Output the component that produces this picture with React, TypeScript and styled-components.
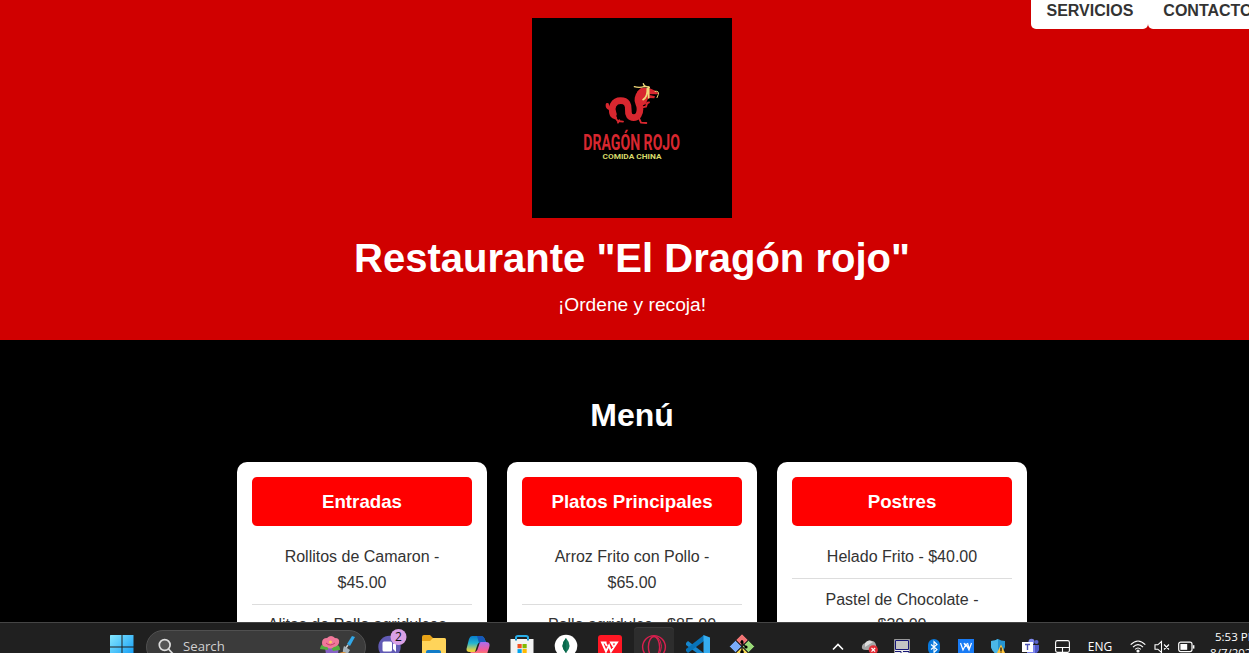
import React from "react";
import styled, { createGlobalStyle } from "styled-components";

const GlobalStyle = createGlobalStyle`
  *, *::before, *::after { box-sizing: border-box; }
  body {
    margin: 0;
    overflow: hidden;
    background: #000;
    font-family: Arial, "Liberation Sans", sans-serif;
    line-height: 1.6;
    color: #333;
  }
  h1, h2, h3, p, ul { margin: 0; padding: 0; }
`;

const Screen = styled.div`
  position: relative;
  width: 100vw;
  height: 653px;
  overflow: hidden;
`;

const Page = styled.div`
  width: 1264px;
`;

const Header = styled.header`
  display: flex;
  flex-direction: column;
  align-items: center;
  height: 340px;
  padding-top: 18px;
  background: #d00000;
  color: #fff;
`;

const Nav = styled.nav`
  position: absolute;
  top: -9px;
  left: 1031px;
  display: flex;
`;

const NavLink = styled.a`
  flex: none;
  height: 38px;
  padding: 1px 14.5px 0 15.5px;
  border-radius: 5px;
  background: #fff;
  color: #333;
  font-size: 16px;
  font-weight: bold;
  line-height: 38px;
`;

const Logo = styled.svg`
  display: block;
  width: 200px;
  height: 200px;
  background: #000;
`;

const Title = styled.h1`
  margin-top: 8px;
  font-size: 40px;
  line-height: 64px;
`;

const Tagline = styled.p`
  font-size: 19.2px;
  line-height: 30px;
`;

const Menu = styled.main`
  display: flex;
  flex-direction: column;
  align-items: center;
  padding-top: 50px;
`;

const MenuTitle = styled.h2`
  color: #fff;
  font-size: 32px;
  line-height: 51px;
`;

const Cards = styled.div`
  display: flex;
  gap: 20px;
  margin-top: 21px;
`;

const Card = styled.section`
  width: 250px;
  height: 330px;
  padding: 15px;
  border-radius: 10px;
  background: #fff;
  text-align: center;
`;

const CardTitle = styled.h3`
  height: 49px;
  margin-bottom: 10.8px;
  border-radius: 5px;
  background: #f00;
  color: #fff;
  font-size: 18.72px;
  line-height: 49px;
`;

const Dishes = styled.ul`
  list-style: none;
`;

const Dish = styled.li`
  padding: 7.6px 10px 8px;
  border-bottom: 1px solid #ddd;
  font-size: 16px;
  line-height: 25.7px;
`;

const Taskbar = styled.footer`
  position: absolute;
  left: 0;
  top: 622px;
  display: flex;
  align-items: center;
  width: 1264px;
  height: 48px;
  padding-left: 100px;
  border-top: 1px solid #454545;
  background: #202020;
  color: #fff;
  font-family: "Segoe UI", "Open Sans", sans-serif;
`;

const Slot = styled.div<{ $w?: number; $active?: boolean }>`
  display: flex;
  flex: none;
  align-items: center;
  justify-content: center;
  width: ${(p) => p.$w ?? 44}px;
  height: 40px;
  ${(p) => p.$active && "background: #2d2d2d; border-radius: 4px; box-shadow: inset 0 1px #3a3a3a; width: 40px; margin: 0 2px;"}
`;

const Icon = styled.svg`
  display: block;
  flex: none;
  overflow: visible;
`;

const Search = styled.div`
  display: flex;
  flex: none;
  align-items: center;
  width: 220px;
  height: 34px;
  margin: 0 2px;
  padding: 0 9px 0 11px;
  border: 1px solid #505050;
  border-radius: 17px;
  background: #3b3b3b;
  color: #d0d0d0;
  font-size: 13.2px;
`;

const SearchLabel = styled.span`
  flex: 1;
  padding: 0 0 1px 9px;
  line-height: 20px;
`;

const Tray = styled.div`
  display: flex;
  flex: none;
  align-items: center;
  margin-left: 58px;
`;

const Language = styled.span`
  width: 44px;
  text-align: center;
  font-size: 12px;
  line-height: 16px;
`;

const Clock = styled.div`
  width: 58px;
  margin: 0 0 3px -2px;
  text-align: right;
  font-size: 11.5px;
  line-height: 16px;
  white-space: nowrap;
`;

const menu = [
  { title: "Entradas", dishes: ["Rollitos de Camaron - $45.00", "Alitas de Pollo agridulces - $55.00"] },
  { title: "Platos Principales", dishes: ["Arroz Frito con Pollo - $65.00", "Pollo agridulce - $85.00"] },
  { title: "Postres", dishes: ["Helado Frito - $40.00", "Pastel de Chocolate - $30.00"] },
];

const DragonLogo = () => (
  <Logo viewBox="0 0 200 200">
    <g transform="translate(38 52) scale(.3333)">
      <g fill="none" stroke="#d8272f" strokeLinecap="round" strokeLinejoin="round">
        <path d="M112 104q-1 8 6 11t5 13q0 11 13 15" strokeWidth="10" />
        <path d="M130 132c-10-20 2-40 22-40s24 14 23 28c-1 15 4 23 16 23s19-12 19-26c0-18-9-18-6-32 2-10 8-18 19-22" strokeWidth="20" />
        <path d="M135 142l8 11 16 2M205 140l8 18 16 1M216 112l12-2 4-12M229 101l8-4M148 151l-4 7" strokeWidth="5.5" />
      </g>
      <path d="M201 66l12-12 26 1 17 7 10 8-5 3-21 1 15 5-2 6-18-1-8 18-12 6-15-10z" fill="#d8272f" />
      <path d="M239 74l17 1" stroke="#000" strokeWidth="3" />
      <g fill="none" stroke="#f0d878" strokeLinecap="round">
        <path d="M193 50q16 5 31-1l14 3M220 41q1 9 17 10" strokeWidth="4" />
        <path d="M236 52v32M232 56q1 25-13 33" strokeWidth="5" />
        <path d="M255 64q13-2 10 9l-4 10" strokeWidth="3" />
      </g>
    </g>
    <text x="0" y="0" fill="#d8272f" fontFamily="Roboto, sans-serif" fontWeight="700" fontSize="22.5" transform="translate(51.3 132) scale(.64 1)" textLength="151" lengthAdjust="spacingAndGlyphs">DRAGÓN ROJO</text>
    <text x="70.5" y="141" fill="#d7da69" fontFamily="Roboto, sans-serif" fontWeight="700" fontSize="8" textLength="59" lengthAdjust="spacingAndGlyphs">COMIDA CHINA</text>
  </Logo>
);

const StartIcon = () => (
  <Icon width="24" height="24" viewBox="0 0 24 24">
    <defs><linearGradient id="start" x2="1" y2="1"><stop stopColor="#86e8ff" /><stop offset="1" stopColor="#0896f5" /></linearGradient></defs>
    <path d="M.5 0H11.5V11.4H0V.5zM12.5 0H23.5V11.4H12.5zM0 12.4H11.5V24H0zM12.5 12.4H23.5V24H12.5z" fill="url(#start)" />
  </Icon>
);
const SearchIcon = () => (
  <Icon width="16" height="18" viewBox="0 0 16 18" fill="none" stroke="#ddd" strokeWidth="1.7">
    <circle cx="6.7" cy="7" r="5.4" fill="#555" /><path d="M10.5 11l4.3 4.7" />
  </Icon>
);
const FlowerIcon = () => (
  <Icon width="36" height="24" viewBox="0 0 36 24">
    <path d="M5 13l14-1-2 13H7z" fill="#8561c4" />
    <path d="M0 14q1-7 8-3v4zM20 15q0-8-9-3l2 4z" fill="#54ad3d" />
    <path d="M2 8q0-5 5-5 4-4 8 0 5 0 4 5-1 3-5 4-4 3-7 0-5 0-5-4z" fill="#f0789a" />
    <path d="M6 8q4 4 9 0" fill="none" stroke="#c93966" /><circle cx="10.5" cy="7" r="1.5" fill="#ffc65c" />
    <path d="M32 1l3 1-5 9-3-2z" fill="#32a8e8" /><path d="M28 10l-3 4" stroke="#ccc" strokeWidth="1.5" />
    <path d="M24 11l6 4q-3 6-7 7-1-6 1-11z" fill="#a5b3bc" /><path d="M18 19q5-4 10 0v6H18z" fill="#d68a32" />
  </Icon>
);
const ChatIcon = () => (
  <Icon width="24" height="24" viewBox="0 0 24 24">
    <circle cx="11.5" cy="12" r="11.2" fill="#625bb5" /><rect x="4.5" y="6.5" width="9.5" height="10" rx="1.5" fill="#fff" /><path d="M15 9l3-2v10l-3-3z" fill="#fff" />
    <circle cx="20.5" cy="2" r="8" fill="#d9a0e6" /><text x="20.5" y="6.3" textAnchor="middle" fontSize="12" fill="#111">2</text>
  </Icon>
);
const FolderIcon = () => (
  <Icon width="24" height="24" viewBox="0 0 24 24">
    <path d="M0 2q0-2 2-2h6l3 3h11q2 0 2 2v16H0z" fill="#e8a317" /><path d="M0 6h8l3-3h11q2 0 2 2v16H0z" fill="#ffd45a" /><path d="M4 21v-4q0-2 2-2h11q2 0 2 2v4z" fill="#117bc7" />
  </Icon>
);
const CopilotIcon = () => (
  <Icon width="24" height="24" viewBox="0 0 24 24">
    <defs>
      <linearGradient id="copilotA" x2="0" y2="1"><stop stopColor="#087ccb" /><stop offset=".45" stopColor="#23b4d1" /><stop offset=".9" stopColor="#e8d33f" /></linearGradient>
      <linearGradient id="copilotB" x2="0" y2="1"><stop stopColor="#a96cf0" /><stop offset=".55" stopColor="#f65c95" /><stop offset="1" stopColor="#ff9b42" /></linearGradient>
    </defs>
    <path d="M6 1h9q3 0 4 4l1 2h-5q-3 0-4 4l-2 6H4q-5 0-3-5L3 4q1-3 3-3z" fill="url(#copilotA)" />
    <path d="M14 7h6q5 0 3 6l-2 6q-1 3-4 3H9q-3 0-4-4l-1-1h4q3 0 4-4z" fill="url(#copilotB)" />
    <path d="M11 1h4q3 0 4 4l1 2h-5l-2 1z" fill="#1757b8" />
  </Icon>
);
const StoreIcon = () => (
  <Icon width="24" height="24" viewBox="0 0 24 24">
    <path d="M6 5V2.5Q6 1 8 1h8q2 0 2 1.5V5" fill="none" stroke="#29aee8" strokeWidth="2" /><path d="M.5 4h23v17q0 3-3 3h-17q-3 0-3-3z" fill="#f3f3f3" /><path d="M6 4v1.5M18 4v1.5" stroke="#168cc0" strokeWidth="2" />
    <path d="M7.5 9h4.2v4.2H7.5z" fill="#f25022" /><path d="M12.5 9h4.2v4.2h-4.2z" fill="#7fba00" /><path d="M7.5 14.1h4.2v4.2H7.5z" fill="#00a4ef" /><path d="M12.5 14.1h4.2v4.2h-4.2z" fill="#ffb900" />
  </Icon>
);
const LeafIcon = () => (
  <Icon width="24" height="24" viewBox="0 0 24 24">
    <circle cx="12" cy="11" r="11.3" fill="#fff" /><path d="M12 3q7 8 0 15-7-7 0-15z" fill="#14775a" /><path d="M12 3q-7 8 0 15z" fill="#07684b" /><path d="M12 17v4" stroke="#6b8f80" />
  </Icon>
);
const OfficeIcon = () => (
  <Icon width="24" height="24" viewBox="0 0 24 24">
    <rect width="24" height="24" rx="3" fill="#ff1724" /><path d="M8.5 7.5H4l4 9 3-6 2 6 6-9h-6l3 5M7 7.5l2 3.5" fill="none" stroke="#fff" strokeWidth="1.9" />
  </Icon>
);
const OperaIcon = () => (
  <Icon width="24" height="24" viewBox="0 0 24 24" fill="none" stroke="#d91f4e">
    <circle cx="12" cy="12" r="11.4" strokeWidth="1.4" /><ellipse cx="12" cy="12" rx="5.6" ry="10.5" strokeWidth="1.4" /><path d="M15 1.5q9 9 0 21" strokeWidth="1" />
  </Icon>
);
const CodeIcon = () => (
  <Icon width="24" height="24" viewBox="0 0 24 24">
    <path d="M0 8l2-2 17 13v5L0 10z" fill="#1686cd" /><path d="M0 16l2 2L18 6V0L0 14z" fill="#0873b8" /><path d="M17.5 0L24 2.5v19L17.5 24z" fill="#35adf1" />
  </Icon>
);
const GitIcon = () => (
  <Icon width="24" height="24" viewBox="0 0 24 24">
    <g stroke="#222" strokeWidth=".6"><path d="M12-1l6 6-6 6-6-6z" fill="#f07474" /><path d="M5.5 5.5l6 6-6 6-6-6z" fill="#7aabfa" /><path d="M18.5 5.5l6 6-6 6-6-6z" fill="#9ada78" /><path d="M12 12l6 6-6 6-6-6z" fill="#f6d852" /></g>
    <path d="M12 20V5M11 7l5 5" stroke="#171717" strokeWidth="1.4" /><circle cx="12" cy="7" r="1.6" /><circle cx="16" cy="12" r="1.6" /><circle cx="12" cy="17" r="1.8" />
  </Icon>
);
const ChevronIcon = () => <Icon width="12" height="8" viewBox="0 0 12 8" fill="none" stroke="#fff" strokeWidth="1.6"><path d="M1 6.5l5-5 5 5" /></Icon>;
const CloudIcon = () => (
  <Icon width="16" height="16" viewBox="0 0 16 16">
    <path d="M4 11q-5 0-4-4 1-3 4-3 2-4 6-2 3 0 4 4l1 5z" fill="#a6a6a6" /><path d="M3 4q3-4 8-1L3 8z" fill="#ddd" /><circle cx="11.3" cy="10.8" r="4.6" fill="#e22b35" /><path d="M9.5 9l3.6 3.6M13.1 9l-3.6 3.6" stroke="#fff" strokeWidth="1.2" />
  </Icon>
);
const PanelIcon = () => (
  <Icon width="16" height="16" viewBox="0 0 16 16"><path d="M.5.5h15V16H.5z" fill="#eee" stroke="#999" /><path d="M1.5 1.5h13v9h-13z" fill="#c4c4c4" stroke="#171777" /><path d="M1 12.5h6V16M9 12.5h6V16" fill="none" stroke="#171777" /></Icon>
);
const BluetoothIcon = () => (
  <Icon width="12" height="16" viewBox="0 0 12 16"><rect width="12" height="16" rx="6" fill="#0878dc" /><path d="M3 5.5l6 5-3 3v-11l3 3-6 5" fill="none" stroke="#fff" strokeWidth="1.1" /></Icon>
);
const WaveIcon = () => (
  <Icon width="16" height="16" viewBox="0 0 16 16"><path d="M0 0h16v16H0z" fill="#187bf5" /><path d="M2.5 4l2.5 7 3-6 3 6 2.5-7M6 4l2 4M9.5 4l1.5 5" fill="none" stroke="#fff" strokeWidth="1.2" /></Icon>
);
const ShieldIcon = () => (
  <Icon width="16" height="16" viewBox="0 0 16 16"><path d="M8 0q3 2 7 2v6q-2 6-7 8-6-3-7-8V2q4 0 7-2z" fill="#2595d2" /><path d="M8 0v16q-6-3-7-8V2q4 0 7-2z" fill="#4ab7e8" /><path d="M11 5.5l5 10.5H6z" fill="#ffc43b" /><path d="M11 8.5v4M11 13.5v1.2" stroke="#111" strokeWidth="1.3" /></Icon>
);
const TeamsIcon = () => (
  <Icon width="17" height="16" viewBox="0 0 17 16"><circle cx="9.5" cy="2.8" r="3" fill="#7d87ec" /><circle cx="14.5" cy="3" r="2" fill="#5961cb" /><path d="M8 6h9v5q-2 5-9 4z" fill="#5059c9" /><path d="M5 6h8v10H5z" fill="#7b83eb" /><rect y="3" width="11" height="10" fill="#fff" /><path d="M3 5.5h5M5.5 5.5V11" stroke="#4d55b6" strokeWidth="1.4" /></Icon>
);
const TouchpadIcon = () => (
  <Icon width="15" height="13" viewBox="0 0 15 13" fill="none" stroke="#fff" strokeWidth="1.1"><rect x=".6" y=".6" width="13.8" height="11.8" rx="1.8" /><path d="M.6 7.5h13.8M7.5 7.5v5" /></Icon>
);
const WifiIcon = () => (
  <Icon width="16" height="13" viewBox="0 0 16 13" fill="none" stroke="#fff" strokeWidth="1.2"><path d="M.7 4.7q7.3-7.4 14.6 0M3 7.1q5-5 10 0M5.2 9.4q2.8-2.8 5.6 0" /><circle cx="8" cy="11" r="1" fill="#fff" /></Icon>
);
const MuteIcon = () => (
  <Icon width="16" height="14" viewBox="0 0 16 14" fill="none" stroke="#fff" strokeWidth="1.1"><path d="M1 4.8h2.8L7.5 1.5v11L3.8 9.2H1zM10 4.5l5 5M15 4.5l-5 5" /></Icon>
);
const BatteryIcon = () => (
  <Icon width="17" height="12" viewBox="0 0 17 12" fill="none" stroke="#fff" strokeWidth="1.2"><rect x=".7" y="1.2" width="13.3" height="9.4" rx="2" /><rect x="3" y="3.6" width="5.6" height="4.6" fill="#fff" /><path d="M15.6 4.2v3.4" strokeWidth="1.6" /></Icon>
);

const apps = [ChatIcon, FolderIcon, CopilotIcon, StoreIcon, LeafIcon, OfficeIcon, OperaIcon, CodeIcon, GitIcon];
const trayIcons = [ChevronIcon, CloudIcon, PanelIcon, BluetoothIcon, WaveIcon, ShieldIcon, TeamsIcon, TouchpadIcon];

export default function App() {
  return (
    <Screen>
      <GlobalStyle />
      <Page>
        <Header>
          <DragonLogo />
          <Title>Restaurante "El Dragón rojo"</Title>
          <Tagline>¡Ordene y recoja!</Tagline>
        </Header>
        <Menu>
          <MenuTitle>Menú</MenuTitle>
          <Cards>
            {menu.map((section) => (
              <Card key={section.title}>
                <CardTitle>{section.title}</CardTitle>
                <Dishes>
                  {section.dishes.map((dish) => <Dish key={dish}>{dish}</Dish>)}
                </Dishes>
              </Card>
            ))}
          </Cards>
        </Menu>
      </Page>
      <Nav>
        <NavLink>SERVICIOS</NavLink>
        <NavLink>CONTACTO</NavLink>
      </Nav>
      <Taskbar>
        <Slot><StartIcon /></Slot>
        <Search>
          <SearchIcon />
          <SearchLabel>Search</SearchLabel>
          <FlowerIcon />
        </Search>
        {apps.map((AppIcon, i) => <Slot key={i} $active={AppIcon === OperaIcon}><AppIcon /></Slot>)}
        <Tray>
          {trayIcons.map((TrayIcon, i) => <Slot key={i} $w={32}><TrayIcon /></Slot>)}
          <Language>ENG</Language>
          <Slot $w={32}><WifiIcon /></Slot>
          <Slot $w={16}><MuteIcon /></Slot>
          <Slot $w={32}><BatteryIcon /></Slot>
          <Clock>5:53 PM<br />8/7/2024</Clock>
        </Tray>
      </Taskbar>
    </Screen>
  );
}
